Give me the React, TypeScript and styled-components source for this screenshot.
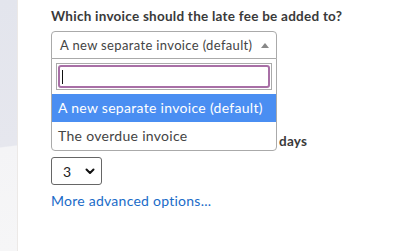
import { styled, createGlobalStyle } from "styled-components";

const GlobalStyle = createGlobalStyle`
  html, body {
    margin: 0;
    padding: 0;
    background: #fff;
  }
  body {
    font-family: "Lato", "Noto Sans", sans-serif;
    color: #333;
  }
`;

const Page = styled.div`
  display: flex;
  width: 405px;
  height: 251px;
  overflow: hidden;
`;

const Backdrop = styled.div`
  flex: 0 0 18px;
  background: linear-gradient(173deg, #e3e5ed 0%, #e6e7ee 58%, #f4f4f6 58.5%, #f6f6f7 100%);
  box-shadow: inset -1px 0 0 #ece9e7;
`;

const Content = styled.div`
  flex: 1;
  padding: 8px 0 0 33px;
  display: flex;
  flex-direction: column;
  align-items: flex-start;
`;

const Label = styled.div`
  font-size: 13.5px;
  font-weight: 700;
  line-height: 16px;
  letter-spacing: 0.25px;
  color: #3a3a3a;
  white-space: nowrap;
`;

const SelectWrap = styled.div`
  position: relative;
  margin-top: 7px;
  width: 226px;
`;

const SelectBox = styled.div<{ $open?: boolean }>`
  box-sizing: border-box;
  height: 28px;
  display: flex;
  align-items: center;
  justify-content: space-between;
  padding: 0 7px 0 8px;
  border: 1px solid #aaa;
  border-radius: ${({ $open }) => ($open ? "4px 4px 0 0" : "4px")};
  font-size: 13px;
  letter-spacing: 0.35px;
  white-space: nowrap;
  color: #444;
  background: #fff;
`;

const Arrow = styled.span`
  flex: none;
  width: 0;
  height: 0;
  border-left: 4px solid transparent;
  border-right: 4px solid transparent;
  border-bottom: 5px solid #888;
`;

const Dropdown = styled.div`
  position: absolute;
  top: 27px;
  left: 0;
  right: 0;
  box-sizing: border-box;
  border: 1px solid #aaa;
  border-radius: 0 0 4px 4px;
  background: #fff;
  z-index: 2;
`;

const SearchArea = styled.div`
  padding: 4px;
`;

const SearchInput = styled.div`
  box-sizing: border-box;
  height: 27px;
  border: 1px solid #aaa;
  padding: 1px;
`;

const SearchRing = styled.div`
  box-sizing: border-box;
  height: 100%;
  border: 2px solid #a86fa6;
  border-radius: 3px;
  display: flex;
  align-items: center;
  padding-left: 2px;
`;

const Caret = styled.span`
  width: 1px;
  height: 14px;
  background: #111;
`;

const Option = styled.div<{ $active?: boolean }>`
  padding: 5px 6px;
  font-size: 14px;
  line-height: 18px;
  letter-spacing: 0.3px;
  white-space: nowrap;
  color: ${({ $active }) => ($active ? "#fff" : "#444")};
  background: ${({ $active }) => ($active ? "#4a8ef2" : "transparent")};
`;

const DaysRow = styled.div`
  display: flex;
  margin-top: 74px;
`;

const Spacer = styled.span`
  width: 228px;
`;

const SmallSelect = styled.div`
  box-sizing: border-box;
  margin-top: 8px;
  width: 51px;
  height: 28px;
  border: 1px solid #666;
  border-radius: 3px;
  display: flex;
  align-items: center;
  justify-content: space-between;
  padding: 0 5px 0 11px;
  font-size: 14px;
  color: #222;
`;

const Link = styled.a`
  margin-top: 8px;
  font-size: 14px;
  line-height: 16px;
  letter-spacing: 0.25px;
  color: #1a6bc8;
  text-decoration: none;
`;

export default function App() {
  return (
    <>
      <GlobalStyle />
      <Page>
        <Backdrop />
        <Content>
          <Label>Which invoice should the late fee be added to?</Label>
          <SelectWrap>
            <SelectBox $open>
              <span>A new separate invoice (default)</span>
              <Arrow />
            </SelectBox>
            <Dropdown>
              <SearchArea>
                <SearchInput>
                  <SearchRing>
                    <Caret />
                  </SearchRing>
                </SearchInput>
              </SearchArea>
              <Option $active>A new separate invoice (default)</Option>
              <Option>The overdue invoice</Option>
            </Dropdown>
          </SelectWrap>
          <DaysRow>
            <Spacer />
            <Label>days</Label>
          </DaysRow>
          <SmallSelect>
            <span>3</span>
            <svg width="12" height="12" viewBox="0 0 12 12" fill="none">
              <path d="M2.5 4.5 L6 8 L9.5 4.5" stroke="#111" strokeWidth="2" strokeLinecap="round" strokeLinejoin="round" />
            </svg>
          </SmallSelect>
          <Link href="#">More advanced options...</Link>
        </Content>
      </Page>
    </>
  );
}
